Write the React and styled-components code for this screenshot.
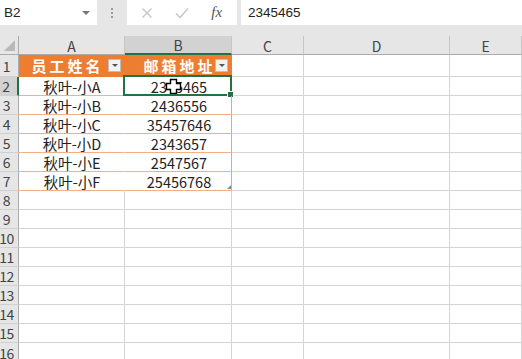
import React from "react";
import styled, { createGlobalStyle } from "styled-components";

const GlobalStyle = createGlobalStyle`
  body {
    margin: 0;
    background: #fff;
    font-family: "Noto Sans CJK SC", "Liberation Sans", sans-serif;
    overflow: hidden;
  }
`;

const Window = styled.div`
  width: 522px;
  height: 359px;
  overflow: hidden;
  background: #e6e6e6;
`;

const FormulaBar = styled.div`
  display: flex;
  height: 25px;
  padding-bottom: 11px;
`;

const NameBox = styled.div`
  width: 97px;
  background: #fff;
  display: flex;
  align-items: center;
  justify-content: space-between;
  padding: 0 7px 0 4px;
  box-sizing: border-box;
  font-family: "Liberation Sans", sans-serif;
  font-size: 13.5px;
  color: #222;
`;

const Caret = styled.span`
  width: 0;
  height: 0;
  border-left: 4px solid transparent;
  border-right: 4px solid transparent;
  border-top: 4px solid #777;
`;

const Splitter = styled.div`
  width: 30px;
  display: flex;
  flex-direction: column;
  align-items: center;
  justify-content: center;
  gap: 2px;

  span {
    width: 2px;
    height: 2px;
    background: #999;
  }
`;

const FxButtons = styled.div`
  width: 110px;
  background: #fff;
  display: flex;
  padding: 0 3px;
  box-sizing: border-box;
  margin-right: 4px;
`;

const FxButton = styled.div`
  width: 35px;
  display: flex;
  align-items: center;
  justify-content: center;
  color: ${(p) => (p.$dim ? "#c4c4c4" : "#555")};
  font-family: "Liberation Serif", serif;
  font-style: italic;
  font-size: 15px;
`;

const FormulaInput = styled.div`
  flex: 1;
  background: #fff;
  display: flex;
  align-items: center;
  padding-left: 7px;
  font-family: "Liberation Sans", sans-serif;
  font-size: 13.5px;
  color: #222;
`;

const Sheet = styled.div`
  display: grid;
  grid-template-columns: 19px 106px 107px 72px 146px 72px;
  grid-template-rows: 19px 22px repeat(14, 19px);
  background: #fff;
`;

const Corner = styled.div`
  background: #e6e6e6;
  border-right: 1px solid #ababab;
  border-bottom: 1px solid #ababab;
  box-sizing: border-box;
  position: relative;

  &::after {
    content: "";
    position: absolute;
    right: 3px;
    bottom: 3px;
    border-left: 11px solid transparent;
    border-bottom: 11px solid #b9b9b9;
  }
`;

const ColHeader = styled.div`
  background: ${(p) => (p.$active ? "#d2d2d2" : "#e6e6e6")};
  border-right: 1px solid #c6c6c6;
  border-bottom: ${(p) => (p.$active ? "2px solid #217346" : "1px solid #ababab")};
  box-sizing: border-box;
  display: flex;
  align-items: center;
  justify-content: center;
  font-size: 14px;
  color: #444;
  padding-top: 1px;
`;

const RowHeader = styled.div`
  background: ${(p) => (p.$active ? "#d2d2d2" : "#e6e6e6")};
  border-right: ${(p) => (p.$active ? "2px solid #217346" : "1px solid #ababab")};
  border-bottom: 1px solid #d0d0d0;
  box-sizing: border-box;
  display: flex;
  align-items: center;
  justify-content: center;
  padding-right: 5px;
  font-size: 14px;
  letter-spacing: -0.5px;
  color: #444;
  white-space: nowrap;
`;

const Cell = styled.div`
  border-right: 1px solid #d4d4d4;
  border-bottom: 1px solid #d4d4d4;
  box-sizing: border-box;
`;

const HeadCell = styled.div`
  background: #ed7d31;
  border-bottom: 1px solid #ed7d31;
  border-right: 1px solid #ed7d31;
  box-sizing: border-box;
  display: flex;
  align-items: center;
  justify-content: center;
  padding-left: ${(p) => p.$left || 0}px;
  padding-right: ${(p) => p.$right || 0}px;
  position: relative;
  color: #fff;
  font-weight: bold;
  font-size: 15px;
  letter-spacing: 3px;
`;

const FilterButton = styled.span`
  position: absolute;
  right: 3px;
  top: 4px;
  width: 13px;
  height: 13px;
  background: #f2f2f2;
  border: 1px solid #bdbdbd;
  box-sizing: border-box;
  display: flex;
  align-items: center;
  justify-content: center;

  &::after {
    content: "";
    border-left: 3px solid transparent;
    border-right: 3px solid transparent;
    border-top: 3px solid #555;
  }
`;

const DataCell = styled.div`
  border-bottom: 1px solid #f4b084;
  border-right: 1px solid ${(p) => (p.$edge ? "#f0a46e" : "#fff")};
  box-sizing: border-box;
  display: flex;
  align-items: center;
  justify-content: center;
  padding-left: ${(p) => p.$shift || 0}px;
  font-size: 14.5px;
  color: #222;
  position: relative;
  white-space: nowrap;
`;

const Selection = styled.span`
  position: absolute;
  left: -2px;
  top: -2px;
  right: -1px;
  bottom: -1px;
  border: 2px solid #217346;
  pointer-events: none;

  &::after {
    content: "";
    position: absolute;
    right: -4px;
    bottom: -4px;
    width: 5px;
    height: 5px;
    background: #217346;
    border: 1px solid #fff;
  }
`;

const ResizeGrip = styled.span`
  position: absolute;
  right: 0;
  bottom: 1px;
  border-left: 4px solid transparent;
  border-bottom: 4px solid #8a8a8a;
`;

const CursorIcon = styled.svg`
  position: absolute;
  left: 40px;
  top: 1px;
`;

const columns = ["A", "B", "C", "D", "E"];

const people = [
  { name: "秋叶-小A", mail: "2345465" },
  { name: "秋叶-小B", mail: "2436556" },
  { name: "秋叶-小C", mail: "35457646" },
  { name: "秋叶-小D", mail: "2343657" },
  { name: "秋叶-小E", mail: "2547567" },
  { name: "秋叶-小F", mail: "25456768" },
];

const PlusCursor = () => (
  <CursorIcon width="17" height="17" viewBox="0 0 17 17">
    <path
      d="M5.5 1.5h6v4h4v6h-4v4h-6v-4h-4v-6h4z"
      fill="#fff"
      stroke="#000"
      strokeWidth="1.4"
    />
  </CursorIcon>
);

const App = () => {
  const emptyRows = Array.from({ length: 9 }, (_, i) => i + 8);

  return (
    <Window>
      <GlobalStyle />
      <FormulaBar>
        <NameBox>
          B2
          <Caret />
        </NameBox>
        <Splitter>
          <span />
          <span />
          <span />
        </Splitter>
        <FxButtons>
          <FxButton $dim>
            <svg width="12" height="12" viewBox="0 0 12 12">
              <path d="M1.5 1.5l9 9M10.5 1.5l-9 9" stroke="#c4c4c4" strokeWidth="1.3" />
            </svg>
          </FxButton>
          <FxButton $dim>
            <svg width="14" height="12" viewBox="0 0 14 12">
              <path d="M1 6.5l4 4 8-9" stroke="#c4c4c4" strokeWidth="1.4" fill="none" />
            </svg>
          </FxButton>
          <FxButton>fx</FxButton>
        </FxButtons>
        <FormulaInput>2345465</FormulaInput>
      </FormulaBar>

      <Sheet>
        <Corner />
        {columns.map((c) => (
          <ColHeader key={c} $active={c === "B"}>
            {c}
          </ColHeader>
        ))}

        <RowHeader>1</RowHeader>
        <HeadCell $right={8}>
          员工姓名
          <FilterButton />
        </HeadCell>
        <HeadCell $left={3}>
          邮箱地址
          <FilterButton />
        </HeadCell>
        <Cell />
        <Cell />
        <Cell />

        {people.map((p, i) => (
          <React.Fragment key={p.name}>
            <RowHeader $active={i === 0}>{i + 2}</RowHeader>
            <DataCell $shift={1}>{p.name}</DataCell>
            <DataCell $edge $shift={2}>
              {p.mail}
              {i === 0 && (
                <>
                  <PlusCursor />
                  <Selection />
                </>
              )}
              {i === people.length - 1 && <ResizeGrip />}
            </DataCell>
            <Cell />
            <Cell />
            <Cell />
          </React.Fragment>
        ))}

        {emptyRows.map((r) => (
          <React.Fragment key={r}>
            <RowHeader>{r}</RowHeader>
            <Cell />
            <Cell />
            <Cell />
            <Cell />
            <Cell />
          </React.Fragment>
        ))}
      </Sheet>
    </Window>
  );
};

export default App;
